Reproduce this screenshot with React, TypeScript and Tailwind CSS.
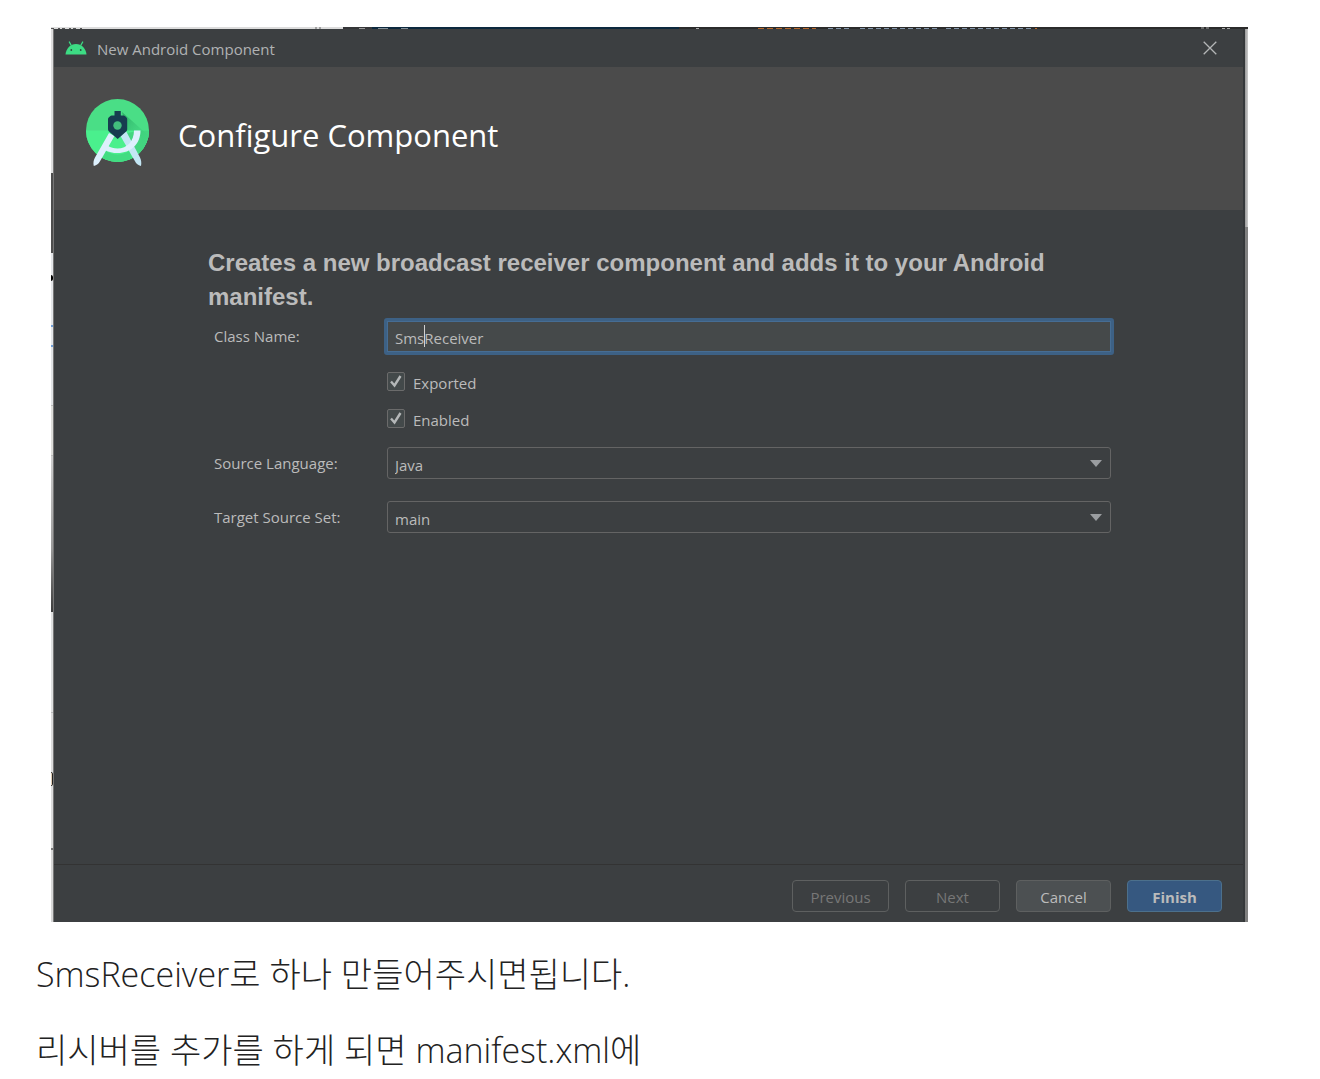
import React from "react";

function AndroidHead() {
  return (
    <svg aria-hidden="true" viewBox="0 0 22 14" className="h-[14px] w-[22px]">
      <path d="M4.3 1 6 4M17.7 1 16 4" stroke="#3ddc84" strokeWidth="1.3" strokeLinecap="round" />
      <path d="M.5 13.5C.9 7.700 5.400 3 11 3s10.100 4.700 10.500 10.500z" fill="#3ddc84" />
      <circle cx="6.300" cy="9" r=".9" fill="#2f4a3c" />
      <circle cx="15.700" cy="9" r=".9" fill="#2f4a3c" />
    </svg>
  );
}

function StudioLogo() {
  return (
    <svg aria-hidden="true" viewBox="0 0 64 70" className="h-[70px] w-[64px] shrink-0">
      <defs>
        <clipPath id="disc">
          <circle cx="31.500" cy="31.500" r="31.500" />
        </clipPath>
        <linearGradient id="shade" x1="0" y1="0" x2="1" y2="1">
          <stop offset="0" stopColor="#249c5b" stopOpacity=".75" />
          <stop offset="1" stopColor="#3ddc84" stopOpacity="0" />
        </linearGradient>
      </defs>
      <g clipPath="url(#disc)">
        <rect width="64" height="64" fill="#4ade86" />
        <rect y="31.500" width="64" height="32" fill="#4af08d" />
        <path d="M41 34 54.500 31.500H64V64H53z" fill="#43d680" />
        <path d="M36 13 63 37 56 46 54.500 31.500H40z" fill="url(#shade)" />
        <path d="M20 52c7 4.500 16 4.500 23 0l6 12H14z" fill="#42dc82" />
      </g>
      <path d="m34.500 37 5.500-5L54 58.500c1.200 2.600 1.700 5.500 1 8.500-3-.8-4.800-2.400-6-4.800z" fill="#c3e6f4" />
      <path d="m28.500 37-5.500-3L9 58.500c-1.400 2.600-2 5.500-1.200 8.500 3-.8 4.900-2.400 6.200-4.800z" fill="#ddf0fd" />
      <path
        d="M48 31.500h6.500C54.500 45 45 54 31.500 54c-4.600 0-8.700-.9-12.300-2.800l2.600-4.400c2.900 1.800 6 2.700 9.700 2.700 9.800 0 16.500-7.500 16.500-18z"
        fill="#ddf0fd"
      />
      <path
        d="M28.500 12h6.300v4.500h2.700q1 0 1.700.8l1.300 1.300q.7.700.7 1.700v10q0 1.300-1 2.200L31.700 40 23 32.500q-1-.9-1-2.200v-10q0-1 .7-1.700l1.400-1.300q.7-.8 1.700-.8h2.700z"
        fill="#173c50"
      />
      <circle cx="31.500" cy="26.500" r="4.200" fill="#42bd7d" />
    </svg>
  );
}

/* Sliver of the editor window that shows above the dialog. */
function EditorEdge() {
  return (
    <div aria-hidden="true" className="flex h-0.5 bg-[#2b2b2b]">
      <svg viewBox="0 0 292 2" className="h-0.5 w-[292px] bg-[#dcdcdc]">
        <path d="M0 1.500H31" stroke="#555" strokeDasharray="3 4 2 2" />
        <path d="M264 1H272" stroke="#666" strokeDasharray="2 2" />
      </svg>
      <svg viewBox="0 0 29 2" className="h-0.5 w-[29px] bg-[#353638]">
        <path d="M16 1.500H22" stroke="#999" />
      </svg>
      <svg viewBox="0 0 307 2" className="h-0.5 w-[307px] bg-[#0d293e]">
        <path d="M6 1.500H16M29 1.500H36" stroke="#829099" />
      </svg>
      <svg viewBox="0 0 569 2" className="h-0.5 w-[569px]">
        <path d="M17 1.500H21M522 1H530M543 1.500H551" stroke="#aaa" strokeDasharray="3 2" />
        <path d="M79 1.500H137" stroke="#b8682b" strokeDasharray="6 3" />
        <path d="M149 1.500H173M181 1.500H258M267 1.500H352" stroke="#8496ab" strokeDasharray="5 3" />
        <path d="M356 1.500H358" stroke="#b8682b" />
      </svg>
    </div>
  );
}

/* Sliver of the window behind the dialog's left border. */
function LeftEdge() {
  return (
    <div aria-hidden="true" className="flex w-[3px] shrink-0 flex-col border-r border-[#777]">
      <div className="h-36 bg-[#dedede]" />
      <div className="h-20 bg-[#4e4e4e]" />
      <div className="h-[22px] bg-[#e4e6e9]" />
      <div className="h-1.5 rounded-r-full bg-black" />
      <div className="h-11 bg-[#e4e6e9]" />
      <div className="h-[22px] border-y-2 border-[#72a0d8] bg-[#e4e6e9]" />
      <div className="h-[58px] bg-[#e2e4e6]" />
      <div className="h-[51px] border-y border-[#bbb] bg-[#dededb]" />
      <div className="h-[92px] bg-gradient-to-b from-[#cfcfcf] to-[#9a9a9a]" />
      <div className="h-16 bg-gradient-to-b from-[#9a9a9a] to-[#3c3c3c]" />
      <div className="h-[100px] bg-[#dfe0e0]" />
      <div className="h-[60px] border-t border-[#bbb] bg-[#dcdcdc]" />
      <div className="h-3.5 rounded-r-full border-y border-r border-[#222] bg-[#e0cdb5]" />
      <div className="h-[62px] bg-[#dcdcdc]" />
      <div className="grow border-t-2 border-[#777] bg-[#d8d8d8]" />
    </div>
  );
}

function CheckOption({ label }: { label: string }) {
  return (
    <label className="flex h-[37px] items-center gap-2">
      <span className="relative h-[19px] w-[18px]">
        <input
          type="checkbox"
          defaultChecked
          className="block h-[19px] w-[18px] appearance-none rounded-[2px] border border-[#6b6b6b] bg-[#43494a]"
        />
        <svg aria-hidden="true" viewBox="0 0 18 19" className="pointer-events-none absolute inset-0 h-[19px] w-[18px]">
          <path d="M4 9.500 7.500 13.500 13.500 4" fill="none" stroke="#b4b7b8" strokeWidth="2.400" />
        </svg>
      </span>
      <span className="pt-0.5">{label}</span>
    </label>
  );
}

function SelectField({ id, value }: { id: string; value: string }) {
  return (
    <div className="relative">
      <select
        id={id}
        className="block h-8 w-full appearance-none rounded-[3px] border border-[#646464] bg-[#3c3f41] px-[7px] pt-1 text-[#bbbbbb]"
      >
        <option>{value}</option>
      </select>
      <svg
        aria-hidden="true"
        viewBox="0 0 12 7"
        className="pointer-events-none absolute right-[9px] top-[13px] h-[7px] w-3"
      >
        <path d="M0 0h12L6 7z" fill="#9a9da0" />
      </svg>
    </div>
  );
}

function Dialog() {
  return (
    <section
      aria-label="New Android Component"
      className="min-w-0 grow border-r-2 border-[#35383a] bg-[#3c3f41] font-['Open_Sans','Noto_Sans',sans-serif] text-[15px] leading-5 text-[#bbbbbb]"
    >
      <header className="flex h-[38px] items-center pl-[11px] pr-[26px]">
        <AndroidHead />
        <span className="pl-2.5 pt-0.5 text-[15px] text-[#b0b2b3]">New Android Component</span>
        <button type="button" aria-label="Close" className="ml-auto">
          <svg aria-hidden="true" viewBox="0 0 14 14" className="h-3.5 w-3.5">
            <path d="M.7.7l12.600 12.600M13.300.7.7 13.300" stroke="#b4b6b7" strokeWidth="1.300" />
          </svg>
        </button>
      </header>

      <div className="flex h-[143px] items-start bg-[#4b4b4b] pl-8 pt-8">
        <StudioLogo />
        <h1 className="pl-7 pt-4 text-[31px] leading-10 text-white">Configure Component</h1>
      </div>

      <form className="flex min-h-[712px] flex-col" onSubmit={(event) => event.preventDefault()}>
        <div className="grow pl-[154px] pr-[129px] pt-9">
          <h2 className="font-['Liberation_Sans',Arial,sans-serif] text-[24px] font-bold leading-[34px]">
            Creates a new broadcast receiver component and adds it to your Android manifest.
          </h2>

          <div className="grid grid-cols-[170px_1fr] items-center pl-1.5 pt-1">
            <label htmlFor="class-name" className="pb-0.5">
              Class Name:
            </label>
            <div className="relative">
              <input
                id="class-name"
                type="text"
                defaultValue="SmsReceiver"
                className="block h-[37px] w-full rounded-[3px] border-[3px] border-[#3d6185] bg-[#45494a] px-2 pt-0.5 outline-none ring-1 ring-inset ring-[#466d94]"
              />
              <span aria-hidden="true" className="absolute left-10 top-[7px] h-[22px] w-px bg-[#d0d0d0]" />
            </div>
          </div>

          <div className="flex flex-col pl-[179px] pt-2">
            <CheckOption label="Exported" />
            <CheckOption label="Enabled" />
          </div>

          <div className="grid grid-cols-[173px_1fr] items-center gap-y-[22px] pl-1.5 pr-[3px] pt-2.5">
            <label htmlFor="language">Source Language:</label>
            <SelectField id="language" value="Java" />
            <label htmlFor="source-set">Target Source Set:</label>
            <SelectField id="source-set" value="main" />
          </div>
        </div>

        <footer className="flex h-[58px] items-start justify-end gap-4 border-t border-[#333333] pr-[21px] pt-[15px]">
          <button type="button" disabled className="h-8 w-[97px] rounded-[4px] border border-[#5e6060] pt-0.5 text-[#777777]">
            Previous
          </button>
          <button type="button" disabled className="h-8 w-[95px] rounded-[4px] border border-[#5e6060] pt-0.5 text-[#777777]">
            Next
          </button>
          <button type="button" className="h-8 w-[95px] rounded-[4px] border border-[#5e6060] bg-[#4c5052] pt-0.5">
            Cancel
          </button>
          <button
            type="submit"
            className="h-8 w-[95px] rounded-[4px] border border-[#4c708c] bg-[#365880] pt-0.5 font-bold"
          >
            Finish
          </button>
        </footer>
      </form>
    </section>
  );
}

export default function App() {
  return (
    <main className="min-h-screen bg-white pt-[27px]">
      <figure className="ml-[51px] mr-[72px]">
        <EditorEdge />
        <div className="flex">
          <LeftEdge />
          <Dialog />
          <div aria-hidden="true" className="flex w-[3px] shrink-0 flex-col">
            <div className="h-[198px] bg-gradient-to-r from-[#9a9a9a] to-[#cccccc]" />
            <div className="grow bg-[#808080]" />
          </div>
        </div>
      </figure>

      <article className="flex flex-col gap-7 px-9 pt-7 font-['Open_Sans','Noto_Sans_CJK_KR',sans-serif] text-[34px] font-light leading-[48px] text-[#222222]">
        <p>SmsReceiver로 하나 만들어주시면됩니다.</p>
        <p>리시버를 추가를 하게 되면 manifest.xml에</p>
      </article>
    </main>
  );
}
